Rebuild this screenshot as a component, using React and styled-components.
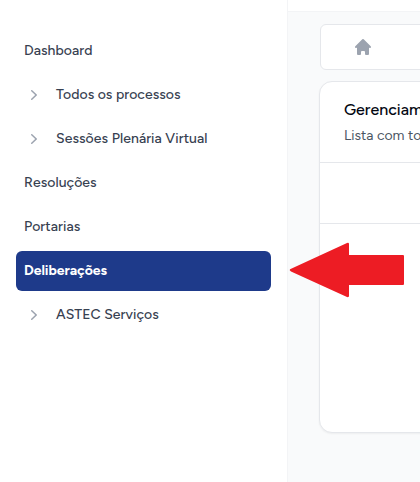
import React from 'react';
import styled, { createGlobalStyle } from 'styled-components';

const GlobalStyle = createGlobalStyle`
  * { box-sizing: border-box; }
  body {
    margin: 0;
    overflow: hidden;
    background: #f9fafb;
    font-family: Figtree, Inter, sans-serif;
  }
`;

const Page = styled.div`
  position: relative;
  display: flex;
  width: 420px;
  height: 482px;
  overflow: hidden;
`;

const Sidebar = styled.nav`
  flex: 0 0 288px;
  display: flex;
  flex-direction: column;
  gap: 4px;
  padding: 31px 16px 0;
  background: #fff;
  border-right: 1px solid #f3f4f6;
`;

const NavItem = styled.a`
  display: flex;
  align-items: center;
  gap: 12px;
  height: 40px;
  padding: 0 8px;
  border-radius: 6px;
  font-size: 14px;
  line-height: 24px;
  white-space: nowrap;
  letter-spacing: ${(p) => p.$tracking || 0}px;
  font-weight: ${(p) => (p.$active ? 700 : 500)};
  color: ${(p) => (p.$active ? '#fff' : '#374151')};
  background: ${(p) => (p.$active ? '#1e3a8a' : 'transparent')};
`;

const Chevron = styled.svg`
  flex: none;
  width: 20px;
  height: 20px;
  fill: #9ca3af;
`;

const Main = styled.main`
  flex: 1;
  min-width: 0;
  background: #f9fafb;
`;

const TopBar = styled.header`
  height: 12px;
  background: #fff;
  border-bottom: 1px solid #f3f4f6;
`;

const Breadcrumb = styled.div`
  display: flex;
  align-items: center;
  width: 400px;
  height: 46px;
  margin: 12px 0 0 32px;
  padding-left: 32px;
  background: #fff;
  border: 1px solid #e5e7eb;
  border-radius: 6px;
`;

const HomeIcon = styled.svg`
  width: 20px;
  height: 20px;
  fill: #9ca3af;
`;

const Card = styled.section`
  width: 400px;
  height: 352px;
  margin: 11px 0 0 31px;
  background: #fff;
  border: 1px solid #e5e7eb;
  border-radius: 13px;
  box-shadow: 0 1px 2px rgba(0, 0, 0, 0.05);
`;

const CardHeader = styled.div`
  height: 81px;
  padding: 16px 24px 0;
  border-bottom: 1px solid #e5e7eb;
  white-space: nowrap;
`;

const CardTitle = styled.h1`
  margin: 0;
  font-size: 16px;
  font-weight: 500;
  line-height: 24px;
  color: #030712;
`;

const CardText = styled.p`
  margin: 3px 0 0;
  font-size: 14px;
  line-height: 21px;
  color: #4b5563;
`;

const CardToolbar = styled.div`
  height: 61px;
  border-bottom: 1px solid #e5e7eb;
`;

const Arrow = styled.svg`
  position: absolute;
  left: 288px;
  top: 240px;
  width: 118px;
  height: 60px;
  fill: #ed1c24;
`;

const items = [
  { label: 'Dashboard', tracking: 0.06 },
  { label: 'Todos os processos', group: true, tracking: 0.05 },
  { label: 'Sessões Plenária Virtual', group: true, tracking: 0.08 },
  { label: 'Resoluções', tracking: 0.06 },
  { label: 'Portarias', tracking: 0.08 },
  { label: 'Deliberações', active: true, tracking: -0.06 },
  { label: 'ASTEC Serviços', group: true, tracking: 0.06 },
];

export default function App() {
  return (
    <>
      <GlobalStyle />
      <Page>
        <Sidebar>
          {items.map((item) => (
            <NavItem key={item.label} $active={item.active} $tracking={item.tracking}>
              {item.group && (
                <Chevron viewBox="0 0 20 20">
                  <path
                    fillRule="evenodd"
                    d="M7.21 14.77a.75.75 0 01.02-1.06L11.168 10 7.23 6.29a.75.75 0 111.04-1.08l4.5 4.25a.75.75 0 010 1.08l-4.5 4.25a.75.75 0 01-1.06-.02z"
                  />
                </Chevron>
              )}
              <span>{item.label}</span>
            </NavItem>
          ))}
        </Sidebar>
        <Main>
          <TopBar />
          <Breadcrumb>
            <HomeIcon viewBox="0 0 20 20">
              <path d="M10.707 2.293a1 1 0 00-1.414 0l-7 7a1 1 0 001.414 1.414L4 10.414V17a1 1 0 001 1h2a1 1 0 001-1v-2a1 1 0 011-1h2a1 1 0 011 1v2a1 1 0 001 1h2a1 1 0 001-1v-6.586l.293.293a1 1 0 001.414-1.414l-7-7z" />
            </HomeIcon>
          </Breadcrumb>
          <Card>
            <CardHeader>
              <CardTitle>Gerenciam</CardTitle>
              <CardText>Lista com to</CardText>
            </CardHeader>
            <CardToolbar />
          </Card>
        </Main>
        <Arrow viewBox="0 0 118 60">
          <path d="M2 29.2 59 3Q61 2.400 61 4V15H115Q116 15 116 16V44Q116 45 115 45H61V56Q61 57.600 59 57L3 31.500Q1 30.200 2 29.200Z" />
        </Arrow>
      </Page>
    </>
  );
}
